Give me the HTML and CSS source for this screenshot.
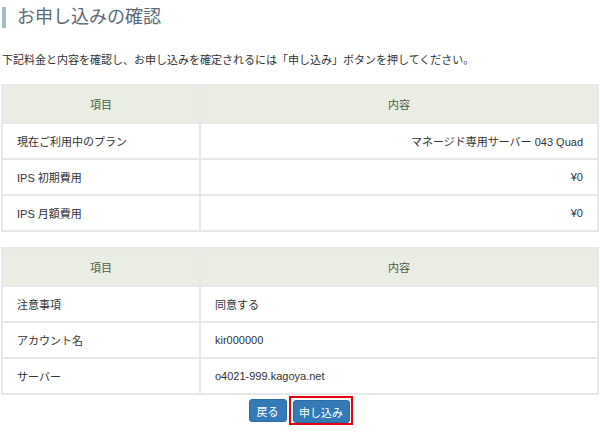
FILE: index.html
```html
<!DOCTYPE html>
<html lang="ja">
<head>
  <meta charset="UTF-8">
  <title>お申し込みの確認</title>
  <link rel="stylesheet" href="styles.css">
</head>
<body>
  <div class="container">
    <h1>お申し込みの確認</h1>

    <p class="lead">下記料金と内容を確認し、お申し込みを確定されるには「申し込み」ボタンを押してください。</p>

    <table class="confirm">
      <tr>
        <th class="col-item">項目</th>
        <th>内容</th>
      </tr>
      <tr>
        <td>現在ご利用中のプラン</td>
        <td class="right">マネージド専用サーバー 043 Quad</td>
      </tr>
      <tr>
        <td>IPS 初期費用</td>
        <td class="right">¥0</td>
      </tr>
      <tr>
        <td>IPS 月額費用</td>
        <td class="right">¥0</td>
      </tr>
    </table>

    <table class="confirm">
      <tr>
        <th class="col-item">項目</th>
        <th>内容</th>
      </tr>
      <tr>
        <td>注意事項</td>
        <td>同意する</td>
      </tr>
      <tr>
        <td>アカウント名</td>
        <td>kir000000</td>
      </tr>
      <tr>
        <td>サーバー</td>
        <td>o4021-999.kagoya.net</td>
      </tr>
    </table>

    <div class="actions">
      <button class="btn">戻る</button>
      <span class="marked">
        <button class="btn btn-wide">申し込み</button>
      </span>
    </div>
  </div>
</body>
</html>
```

FILE: styles.css
```css
body {
  font-family: 'Liberation Sans', 'Noto Sans CJK JP', sans-serif;
  font-size: 11px;
  color: #333;
  background: #fff;
  margin: 0;
}
.container {
  padding: 0 1px;
}
h1 {
  margin: 7px 0 0 1px;
  padding: 0 0 0 11px;
  border-left: 4px solid #a2bcc5;
  font-size: 18px;
  font-weight: normal;
  line-height: 21px;
  color: #5b6b79;
}
.lead {
  margin: 24px 0 0 1px;
  line-height: 16px;
}
.confirm {
  width: 598px;
  border-collapse: collapse;
  margin-top: 16px;
}
.confirm + .confirm {
  margin-top: 15px;
}
.confirm th,
.confirm td {
  border: 2px solid #e8e8e8;
  padding: 0 14px;
  height: 34px;
  text-align: left;
}
.confirm th {
  background: #e9ede4;
  color: #4f5c43;
  font-weight: normal;
  text-align: center;
  height: 36px;
}
.col-item {
  width: 168px;
}
.right {
  text-align: right !important;
}
.actions {
  display: flex;
  justify-content: center;
  align-items: center;
  gap: 2px;
  margin-top: 1px;
  padding-left: 1px;
}
.btn {
  font-family: inherit;
  font-size: 11px;
  color: #fff;
  background: #337ab7;
  border: 1px solid #2e6da4;
  border-radius: 3px;
  height: 23px;
  padding: 0 7px;
  cursor: pointer;
}
.btn-wide {
  width: 57px;
  padding: 0;
}
.marked {
  display: flex;
  border: 2px solid #e50012;
  padding: 2px 1px 0 2px;
}
```
